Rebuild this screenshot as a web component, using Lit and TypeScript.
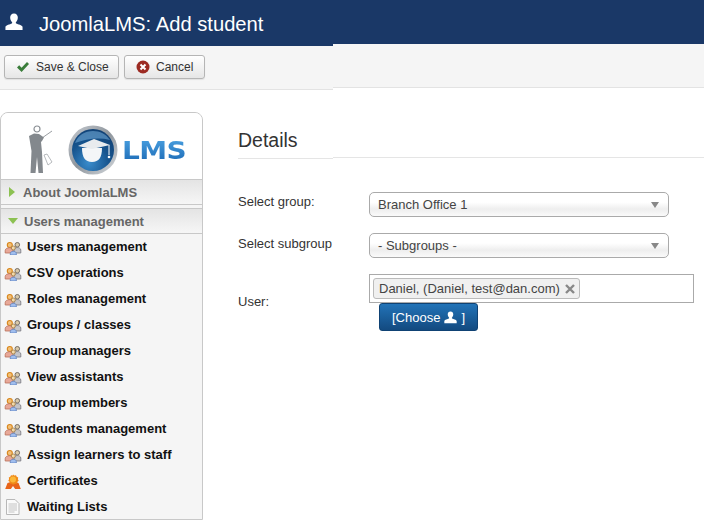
import { LitElement, html, css, svg } from "lit";
import { customElement } from "lit/decorators.js";

const person = (size: number, color: string) => html`<svg class="person" width=${size} height=${size} viewBox="0 0 16 16" fill=${color}><path d="M8 .5c2.200 0 3.400 1.600 3.400 3.600 0 1.500-.6 3-1.500 3.900-.4.4-.4 1 .1 1.300 1.500.8 5.200 1.400 5.600 3V15H.4v-2.700c.4-1.600 4.100-2.200 5.600-3 .5-.3.500-.9.100-1.300C5.200 7.100 4.600 5.600 4.600 4.100 4.600 2.100 5.800.5 8 .5z"/></svg>`;

const users = html`<svg class="ico" width="18" height="18" viewBox="0 0 18 18">
  <circle cx="13.300" cy="7.800" r="2.300" fill="#d8c8a8" stroke="#6a625a" stroke-width=".9"/>
  <path d="M10 16v-3c0-1.600 1.500-2.500 3.200-2.500s3.600.9 3.600 2.500v3z" fill="#c4c4c8" stroke="#77777e" stroke-width=".8"/>
  <circle cx="5.800" cy="8" r="2.500" fill="#f2c078" stroke="#d8861c" stroke-width="1.100"/>
  <path d="M1.200 16v-2.500c0-1.800 2.400-2.800 4.300-2.800s3.500 1 3.500 2.800V16z" fill="#e8a898" stroke="#b87058" stroke-width=".8"/>
  <circle cx="9.300" cy="11" r="2" fill="#f3d8a8" stroke="#a07a40" stroke-width=".8"/>
  <path d="M6.300 18v-1.500c0-1.400 1.400-2.200 3-2.200s3 .8 3 2.200V18z" fill="#a0beee" stroke="#6080bc" stroke-width=".8"/>
</svg>`;

const cert = html`<svg class="ico" width="18" height="18" viewBox="0 0 18 18">
  <path d="M1 18.500 3.500 12 7 11h4l3.500 1L17 18.500h-5.500L9 15l-2.500 3.500z" fill="#e8641a"/>
  <path d="M9 3.500l1.300 1 1.700-.3.700 1.500 1.500.8-.3 1.700.8 1.500-1.300 1.100-.3 1.700-1.700.2L9 13.700l-1.400-1-1.700-.2-.3-1.700-1.300-1.100.8-1.500-.3-1.700 1.500-.8.7-1.500 1.700.3z" fill="#f08a18"/>
  <circle cx="9" cy="8.500" r="3" fill="#fbb838"/>
</svg>`;

const doc = html`<svg class="ico" width="18" height="18" viewBox="0 0 18 18">
  <path d="M2.500 2.500h8.500l4 4v11H2.500z" fill="#fafafa" stroke="#b8b8b8"/>
  <path d="M4.500 7h8.500M4.500 9h8.500M4.500 11h8.500M4.500 13h8.500M4.500 15h6" stroke="#c4c4c4"/>
</svg>`;

const items: [string, unknown][] = [
  ["Users management", users],
  ["CSV operations", users],
  ["Roles management", users],
  ["Groups / classes", users],
  ["Group managers", users],
  ["View assistants", users],
  ["Group members", users],
  ["Students management", users],
  ["Assign learners to staff", users],
  ["Certificates", cert],
  ["Waiting Lists", doc],
];

const logoFigure = svg`<svg width="24" height="50" viewBox="0 0 24 50">
  <circle cx="8" cy="4" r="3" fill="#fff" stroke="#8a8f94" stroke-width="1.200"/>
  <path d="M23 6 13 13" stroke="#9a9ea2" stroke-width="1"/>
  <path d="M0 11 5 8.500l5 .5 5 3.500-2 3.500-1 1 1 10 1 21h-4.500L8 32l-1.500 16H1.500l1-22L1 17z" fill="#83888d"/>
  <path d="M15 30l3-1 5 8-4 3z" fill="#fff" stroke="#a4a8ac" stroke-width=".8"/>
</svg>`;

const logoGlobe = svg`<svg width="50" height="50" viewBox="0 0 50 50">
  <defs>
    <linearGradient id="rim" x1="0" y1="0" x2="1" y2="1"><stop offset="0" stop-color="#c8ccd2"/><stop offset=".5" stop-color="#8e959c"/><stop offset="1" stop-color="#d8dce0"/></linearGradient>
    <radialGradient id="ball" cx=".4" cy=".8" r=".85"><stop offset="0" stop-color="#3a8ccc"/><stop offset=".55" stop-color="#17558f"/><stop offset="1" stop-color="#103f72"/></radialGradient>
  </defs>
  <circle cx="25" cy="25" r="24.500" fill="url(#rim)"/>
  <circle cx="25" cy="25" r="21" fill="url(#ball)"/>
  <path d="M7 18c3-8 10-12 18-12 7 0 13 3 17 9-12-3-24-1-35 3z" fill="#6fa9d6" opacity=".6"/>
  <path d="M14 23h20c0 9-3 14-10 14s-10-5-10-14z" fill="#f4f6f8"/>
  <path d="M10 21 26 14l16 6-18 4z" fill="#e8ebee"/>
  <path d="M41 20v10" stroke="#fff" stroke-width="1"/><circle cx="41" cy="32" r="1.300" fill="#fff"/>
</svg>`;

@customElement("app-root")
export class AppRoot extends LitElement {
  static styles = css`
    :host { display: block; width: 704px; height: 521px; overflow: hidden; background: #fff; font-family: "Liberation Sans", Arial, sans-serif; color: #333; font-size: 13px; }
    .top { height: 44px; background: #1a3867; display: flex; align-items: center; padding-left: 5px; color: #fff; }
    .top .person { margin-right: 16px; margin-top: 0; }
    .top h1 { margin: 4px 0 0; font-size: 20.200px; font-weight: 400; line-height: 44px; }
    .bars { display: flex; align-items: flex-start; }
    .bar { height: 46px; box-sizing: border-box; width: 333px; flex: none; background: #f5f5f5; border-top: 2px solid #1a3867; border-bottom: 1px solid #e3e3e3; display: flex; gap: 5px; padding: 9px 4px 0; }
    .rest { flex: 1; height: 44px; box-sizing: border-box; background: #f5f5f5; border-bottom: 1px solid #e3e3e3; }
    .btn { height: 24px; box-sizing: border-box; display: flex; align-items: center; border: 1px solid #b5b5b5; border-radius: 3px; background: linear-gradient(#fff, #e6e6e6); color: #333; font-size: 12px; box-shadow: 0 1px 1px rgba(0,0,0,.08); }
    .save { width: 115px; padding-left: 11px; gap: 6px; }
    .cancel { width: 81px; padding-left: 11px; gap: 6px; }
    .main { display: flex; align-items: flex-start; margin-top: 22px; }
    .side { width: 203px; height: 408px; box-sizing: border-box; flex: none; background: #f5f5f5; border: 1px solid #c8c8c8; border-radius: 8px 8px 0 0; overflow: hidden; }
    .logo { height: 66px; background: #fff; display: flex; align-items: flex-end; padding: 0 0 4px 28px; box-sizing: border-box; }
    .logo svg:nth-child(2) { margin-left: 15px; }
    .logo .lms { font-family: "DejaVu Sans", sans-serif; font-weight: 700; font-size: 25px; letter-spacing: -.5px; line-height: 26px; transform: scaleX(1.12); transform-origin: left; margin: 0 0 11px 4px; background: linear-gradient(#4aa0e0, #1a68b4); -webkit-background-clip: text; background-clip: text; color: transparent; }
    .sec { display: flex; align-items: center; box-sizing: border-box; height: 26px; padding-left: 8px; font-size: 13px; font-weight: 700; color: #666; background: linear-gradient(#e4e4e4, #f6f6f6); border-top: 1px solid #c8c8c8; border-bottom: 1px solid #c8c8c8; }
    .sec.about { margin-bottom: 3px; gap: 8px; }
    .sec.um { gap: 6px; margin-left: 0; }
    .tri { width: 0; height: 0; flex: none; }
    .right { border-top: 5px solid transparent; border-bottom: 5px solid transparent; border-left: 6px solid #8cc152; }
    .down { border-left: 5px solid transparent; border-right: 5px solid transparent; border-top: 6px solid #8cc152; margin-left: -1px; }
    ul { list-style: none; margin: -1px 0 0; padding: 0; }
    li { height: 26px; display: flex; align-items: center; gap: 5px; padding-left: 3px; font-size: 13px; font-weight: 700; color: #111; }
    .content { flex: 1; padding: 0 0 0 35px; min-width: 0; }
    h2 { margin: 0; font-size: 19.500px; font-weight: 400; line-height: 24px; padding: 16px 0 5px; color: #333; }
    .rule { display: flex; align-items: flex-start; height: 2px; }
    .ra { width: 95px; height: 1px; margin-top: 1px; background: #e5e5e5; }
    .rb { flex: 1; height: 1px; background: #e5e5e5; }
    .form { display: grid; grid-template-columns: 131px 1fr; margin-top: 33px; font-size: 13px; }
    .lbl { color: #333; line-height: 15px; }
    .l1 { padding-top: 2px; }
    .l2 { padding-top: 3px; }
    .l3 { padding-top: 20px; grid-row: span 2; }
    .sel { position: relative; box-sizing: border-box; width: 300px; height: 25px; line-height: 23px; padding-left: 8px; border: 1px solid #aaa; border-radius: 5px; background: linear-gradient(#fff 40%, #eee 70%, #fafafa); color: #444; margin-bottom: 16px; }
    .sel::after { content: ""; position: absolute; right: 9px; top: 9px; border-left: 4px solid transparent; border-right: 4px solid transparent; border-top: 6px solid #888; }
    .field { box-sizing: border-box; width: 325px; height: 29px; border: 1px solid #aaa; padding: 3px 0 0 3px; background: #fff; }
    .chip { display: inline-flex; align-items: center; box-sizing: border-box; height: 21px; padding: 0 4px 0 5px; gap: 5px; border: 1px solid #bbb; border-radius: 3px; background: #f0f0f0; color: #444; font-size: 13px; }
    .choose { display: flex; width: max-content; box-sizing: border-box; height: 28px; align-items: center; gap: 4px; margin-left: 10px; padding: 0 12px; border: 1px solid #0f4274; border-radius: 3px; background: linear-gradient(#2273b7, #134a80); color: #fff; font-size: 13px; }
  `;

  render() {
    return html`
      <div class="top">${person(18, "#fff")}<h1>JoomlaLMS: Add student</h1></div>
      <div class="bars">
        <div class="bar">
          <div class="btn save"><svg width="14" height="12" viewBox="0 0 14 12"><path d="M1 6.500 3.200 4.300l2.400 2.500L11 1l2 2-7.400 8z" fill="#3a7d3a"/></svg>Save &amp; Close</div>
          <div class="btn cancel"><svg width="14" height="14" viewBox="0 0 14 14"><circle cx="7" cy="7" r="6.500" fill="#9c2a22"/><path d="M4.500 4.500l5 5m0-5-5 5" stroke="#fff" stroke-width="2"/></svg>Cancel</div>
        </div>
        <div class="rest"></div>
      </div>
      <div class="main">
        <div class="side">
          <div class="logo">${logoFigure}${logoGlobe}<span class="lms">LMS</span></div>
          <div class="sec about"><span class="tri right"></span>About JoomlaLMS</div>
          <div class="sec um"><span class="tri down"></span>Users management</div>
          <ul>${items.map(([t, i]) => html`<li>${i}${t}</li>`)}</ul>
        </div>
        <div class="content">
          <h2>Details</h2>
          <div class="rule"><div class="ra"></div><div class="rb"></div></div>
          <div class="form">
            <div class="lbl l1">Select group:</div><div class="sel">Branch Office 1</div>
            <div class="lbl l2">Select subgroup</div><div class="sel">- Subgroups -</div>
            <div class="lbl l3">User:</div>
            <div class="field"><span class="chip">Daniel, (Daniel, test@dan.com) <svg width="10" height="10" viewBox="0 0 10 10"><path d="M1 1l8 8M9 1 1 9" stroke="#888" stroke-width="2.400"/></svg></span></div>
            <div class="choose">[Choose ${person(13, "#fff")} ]</div>
          </div>
        </div>
      </div>
    `;
  }
}
